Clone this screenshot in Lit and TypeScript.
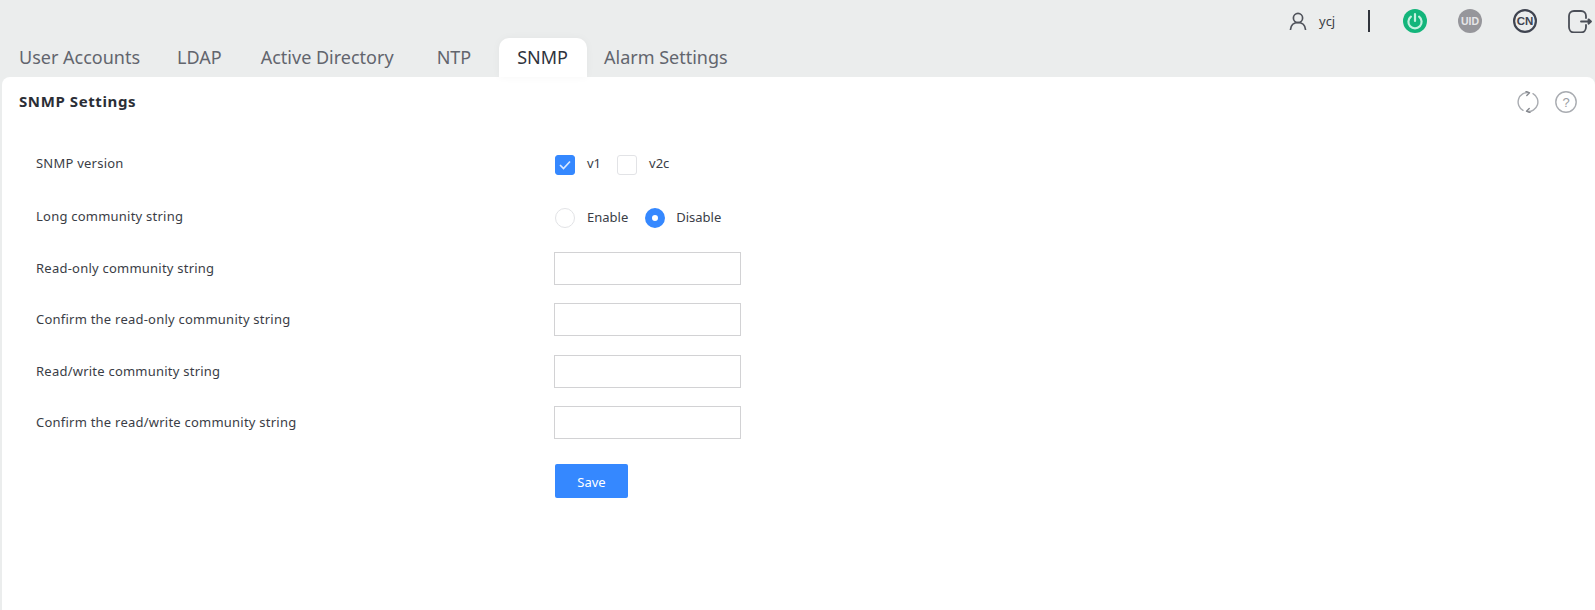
import { LitElement, html, css } from "lit";
import { customElement } from "lit/decorators.js";

@customElement("app-root")
export class AppRoot extends LitElement {
  static styles = css`
    :host { display: block; width: 1595px; height: 610px; overflow: hidden; background: #ebeded; font-family: "Noto Sans", "Open Sans", sans-serif; color: #333; }
    .top { height: 38px; display: flex; align-items: flex-start; }
    .tools { margin-left: auto; display: flex; align-items: center; height: 42px; width: 306px; flex: none; }
    .ic { display: block; flex: none; }
    .name { font-size: 13px; margin-left: 12px; color: #3c3f47; width: 49px; flex: none; }
    .sep { width: 2px; height: 22px; background: #30343c; flex: none; margin-right: 33px; }
    .tools .g1 { margin-right: 31px; }
    .tabs { display: flex; height: 39px; padding-left: 2px; }
    .tab { font-size: 18px; color: #62656d; padding: 0 17px; line-height: 38px; white-space: nowrap; }
    .tab.ldap { margin-left: 3px; }
    .tab.ad { margin-left: 5px; }
    .tab.ntp { margin-left: 9px; }
    .tab.on { margin-left: 11px; padding: 0 19px 0 18px; background: #fff; color: #2f333d; border-radius: 10px 10px 0 0; box-shadow: 0 0 8px rgba(0,0,0,.04); }
    .panel { margin-left: 2px; height: 533px; background: #fff; border-radius: 8px 8px 0 0; box-sizing: border-box; }
    .head { display: flex; align-items: center; height: 50px; padding-left: 17px; padding-right: 18px; }
    .title { font-size: 15px; font-weight: 700; letter-spacing: .6px; color: #2b2e36; margin-top: -2px; }
    .acts { margin-left: auto; display: flex; gap: 16px; align-items: center; }
    .form { padding-top: 13.25px; padding-left: 34px; }
    .row { display: flex; align-items: center; height: 51.3px; font-size: 13px; color: #3a3d46; }
    .lab { width: 519px; flex: none; box-sizing: border-box; letter-spacing: .23px; padding-bottom: 1px; }
    .row.first .lab { padding-bottom: 5px; }
    .row.first .ctl { padding-bottom: 2px; }
    .row.second .lab { padding-bottom: 2px; }
    .row.second .ctl { padding-top: 2px; }
    .ctl { display: flex; align-items: center; }
    .box { width: 20px; height: 20px; box-sizing: border-box; border: 1px solid #e2e3e6; border-radius: 3px; background: #fff; display: flex; align-items: center; justify-content: center; flex: none; }
    .box.on { background: #3588ff; border-color: #3588ff; }
    .radio { width: 20px; height: 20px; box-sizing: border-box; border: 1px solid #e2e3e6; border-radius: 50%; background: #fff; flex: none; }
    .radio.on { border: 7px solid #3588ff; margin-left: 1px; }
    .opt { margin-left: 12px; margin-right: 16px; padding-bottom: 3px; }
    .radio.on + .opt { margin-left: 11px; }
    input { display: block; width: 187px; height: 33px; box-sizing: border-box; border: 1px solid #d2d2d4; background: #fff; outline: 0; padding: 0; }
    .inp { margin-left: -1px; }
    .save { display: block; width: 73px; height: 34px; margin: 16px 0 0 519px; background: #3588ff; border: 0; border-radius: 2px; color: #fff; font: inherit; font-size: 13px; padding: 1px 0 0; }
  `;

  private field(label: string) {
    return html`<div class="row"><div class="lab">${label}</div><div class="ctl inp"><input type="text" /></div></div>`;
  }

  render() {
    return html`
      <div class="top">
        <div class="tools">
          <svg class="ic" width="18" height="18" viewBox="0 0 18 18" fill="none" stroke="#50535b" stroke-width="1.7">
            <circle cx="9" cy="6" r="4.6"/><path d="M1.5 17.500c.5-4.500 3.500-7 7.500-7s7 2.500 7.500 7" stroke-linecap="round"/>
          </svg>
          <span class="name">ycj</span>
          <span class="sep"></span>
          <svg class="ic g1" width="24" height="24" viewBox="0 0 24 24" fill="none">
            <circle cx="12" cy="12" r="12" fill="#13b57b"/>
            <path d="M7.900 7.700a6.600 6.600 0 1 0 8.200 0" stroke="#c4f0df" stroke-width="2.200" stroke-linecap="round"/>
            <path d="M12 5v7" stroke="#c4f0df" stroke-width="2.200" stroke-linecap="round"/>
          </svg>
          <svg class="ic g1" width="24" height="24" viewBox="0 0 24 24">
            <circle cx="12" cy="12" r="12" fill="#96969b"/>
            <text x="12" y="16" text-anchor="middle" font-size="10.5" font-weight="700" fill="#e6e6e8" font-family="Liberation Sans">UID</text>
          </svg>
          <svg class="ic g1" width="24" height="24" viewBox="0 0 24 24">
            <circle cx="12" cy="12" r="10.900" fill="none" stroke="#3f4450" stroke-width="2.200"/>
            <text x="12" y="16" text-anchor="middle" font-size="11.500" font-weight="700" fill="#3f4450" font-family="Liberation Sans">CN</text>
          </svg>
          <svg class="ic" width="24" height="24" viewBox="0 0 24 24" fill="none" stroke="#4a4e57" stroke-width="1.800" stroke-linecap="round" stroke-linejoin="round">
            <path d="M18 9V7C18 4 16 2 13 2H6C3 2 1 4 1 7V18C1 21 3 23.500 6 23.500H13C16 23.500 18 21 18 18V16"/>
            <path d="M13 12.500H22"/><path d="M20.500 10.300L23 12.500 20.500 14.700Z" fill="#4a4e57"/>
          </svg>
        </div>
      </div>
      <div class="tabs">
        <div class="tab">User Accounts</div>
        <div class="tab ldap">LDAP</div>
        <div class="tab ad">Active Directory</div>
        <div class="tab ntp">NTP</div>
        <div class="tab on">SNMP</div>
        <div class="tab">Alarm Settings</div>
      </div>
      <div class="panel">
        <div class="head">
          <div class="title">SNMP Settings</div>
          <div class="acts">
            <svg width="22" height="22" viewBox="0 0 22 22" fill="none" stroke="#a9acb1" stroke-width="1.400" stroke-linecap="round" stroke-linejoin="round">
              <path d="M6 19.300A9.500 9.500 0 0 1 12 1.600"/><path d="M16 2.700A9.500 9.500 0 0 1 10 20.400"/>
              <path d="M9 .4L12.500 1.800 9.800 4.500" stroke="#85888e"/><path d="M13 21.600L9.500 20.200 12.200 17.500" stroke="#85888e"/>
            </svg>
            <svg width="22" height="22" viewBox="0 0 22 22">
              <circle cx="11" cy="11" r="10.200" fill="none" stroke="#a9acb1" stroke-width="1.400"/>
              <text x="11" y="15.500" text-anchor="middle" font-size="13" fill="#9a9da3" font-family="Liberation Sans">?</text>
            </svg>
          </div>
        </div>
        <div class="form">
          <div class="row first"><div class="lab">SNMP version</div><div class="ctl">
            <span class="box on"><svg width="12" height="10" viewBox="0 0 12 10" fill="none" stroke="#d9e8ff" stroke-width="1.700"><path d="M1 5l3.500 3.500L11 1.500"/></svg></span>
            <span class="opt">v1</span>
            <span class="box"></span>
            <span class="opt">v2c</span>
          </div></div>
          <div class="row second"><div class="lab">Long community string</div><div class="ctl">
            <span class="radio"></span><span class="opt">Enable</span>
            <span class="radio on"></span><span class="opt">Disable</span>
          </div></div>
          ${this.field("Read-only community string")}
          ${this.field("Confirm the read-only community string")}
          ${this.field("Read/write community string")}
          ${this.field("Confirm the read/write community string")}
          <button class="save">Save</button>
        </div>
      </div>
    `;
  }
}
